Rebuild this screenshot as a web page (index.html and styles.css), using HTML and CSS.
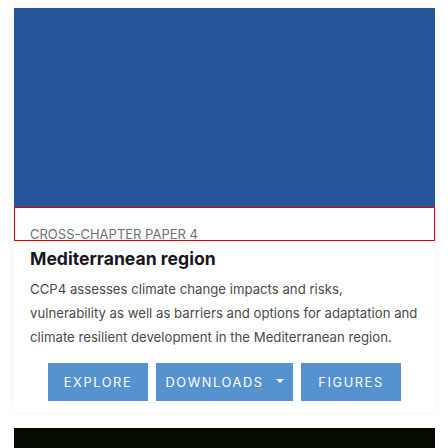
FILE: index.html
```html
<!DOCTYPE html>
<html>
<head>
<meta charset="utf-8">
<link rel="stylesheet" href="styles.css">
</head>
<body>
<div class="page">
  <div class="card">
    <div class="cover"></div>
    <div class="body">
      <div class="label">CROSS-CHAPTER PAPER 4</div>
      <h2 class="title">Mediterranean region</h2>
      <p class="desc">CCP4 assesses climate change impacts and risks,<br>vulnerability as well as barriers and options for adaptation and<br>climate resilient development in the Mediterranean region.</p>
      <div class="actions">
        <a class="btn btn-explore">EXPLORE</a>
        <a class="btn btn-downloads">DOWNLOADS <span class="caret"></span></a>
        <a class="btn btn-figures">FIGURES</a>
      </div>
    </div>
  </div>
  <div class="dark"></div>
</div>
</body>
</html>
```
FILE: styles.css
```css
html, body {
  margin: 0;
  padding: 0;
  background: #ffffff;
  overflow: hidden;
}
.page {
  padding: 8px 13px 0 14px;
  display: flex;
  flex-direction: column;
  gap: 16px;
  font-family: Inter, "Noto Sans", sans-serif;
}
.card {
  background: #fff;
  border-radius: 0 0 4px 4px;
  box-shadow: 0 0 10px rgba(0,0,0,0.06);
  padding-bottom: 11px;
}
.cover {
  height: 199px;
  background: #27559a;
}
.label {
  padding: 20px 16px 0 16px;
  height: 14px;
  font-size: 13px;
  line-height: 14px;
  color: #6e7078;
  outline: 1px solid #e00000;
  outline-offset: -1px;
}
.title {
  margin: 6px 16px 0 16px;
  font-size: 17.6px;
  line-height: 24px;
  font-weight: 700;
  color: #16181d;
}
.desc {
  margin: 6px 0 0 16px;
  font-size: 13.2px;
  line-height: 24px;
  color: #4a4a4a;
  white-space: nowrap;
}
.actions {
  margin-top: 14px;
  display: flex;
  justify-content: center;
  gap: 8px;
}
.btn {
  display: flex;
  align-items: center;
  justify-content: center;
  height: 38px;
  background: #5592ce;
  color: #fff;
  font-size: 12.8px;
  font-weight: 400;
  letter-spacing: 1.6px;
}
.btn-explore { width: 100px; }
.btn-downloads { width: 137px; gap: 12px; }
.btn-figures { width: 100px; }
.caret {
  width: 0;
  height: 0;
  border-left: 4px solid transparent;
  border-right: 4px solid transparent;
  border-top: 4px solid #fff;
  margin-top: -3px;
}
.dark {
  height: 40px;
  background: #050d03;
}
```
